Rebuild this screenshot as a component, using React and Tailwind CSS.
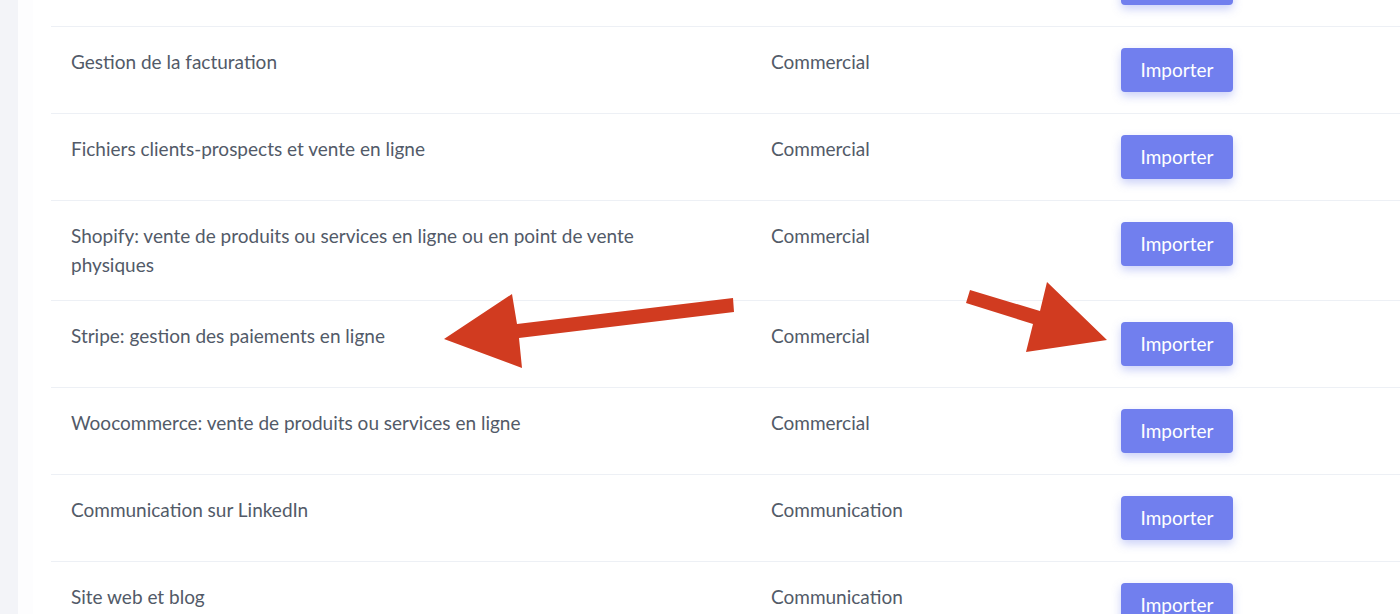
import React from "react";

const rows = [
  { name: "Import précédent", cat: "", hideText: true },
  { name: "Gestion de la facturation", cat: "Commercial" },
  { name: "Fichiers clients-prospects et vente en ligne", cat: "Commercial" },
  {
    name: (
      <>
        Shopify: vente de produits ou services en ligne ou en point de vente
        <br />
        physiques
      </>
    ),
    cat: "Commercial",
  },
  { name: "Stripe: gestion des paiements en ligne", cat: "Commercial" },
  { name: "Woocommerce: vente de produits ou services en ligne", cat: "Commercial" },
  { name: "Communication sur LinkedIn", cat: "Communication" },
  { name: "Site web et blog", cat: "Communication" },
];

function Row({ row, first }) {
  return (
    <div
      className={
        "flex items-start border-b border-[#edf0f5] " + (first ? "mt-[-60px]" : "")
      }
    >
      <div className="w-[700px] shrink-0 px-5 py-[21px] leading-[28.5px]">
        {row.hideText ? <span className="invisible">.</span> : row.name}
      </div>
      <div className="w-[350px] shrink-0 px-5 py-[21px] leading-[28.5px]">
        {row.cat}
      </div>
      <div className="flex-1 px-5 py-[21px]">
        <button className="h-[44px] w-[112px] rounded-[4px] bg-[#717fee] text-[19px] text-white shadow-[0_4px_10px_rgba(102,120,236,0.35)]">
          Importer
        </button>
      </div>
    </div>
  );
}

export default function App() {
  return (
    <div
      className="relative flex h-[614px] w-[1400px] overflow-hidden bg-white text-[19px] text-[#525a68]"
      style={{ fontFamily: "Lato, 'Open Sans', sans-serif" }}
    >
      <div className="w-[18px] shrink-0 bg-[#f3f4f8]" />
      <div className="w-[15px] shrink-0 bg-[#fdfdfe]" />
      <div className="flex-1 pl-[18px]">
        {rows.map((r, i) => (
          <Row key={i} row={r} first={i === 0} />
        ))}
      </div>
      <svg
        className="pointer-events-none absolute left-0 top-0"
        width="1400"
        height="614"
        viewBox="0 0 1400 614"
      >
        <polygon
          fill="#d13b20"
          points="444,339 512,294 517,324 733,298 734,312 519,338 522,368"
        />
        <polygon
          fill="#d13b20"
          points="970,290 1040,311 1047,282 1107,340 1026,352 1033,324 966,303"
        />
      </svg>
    </div>
  );
}
